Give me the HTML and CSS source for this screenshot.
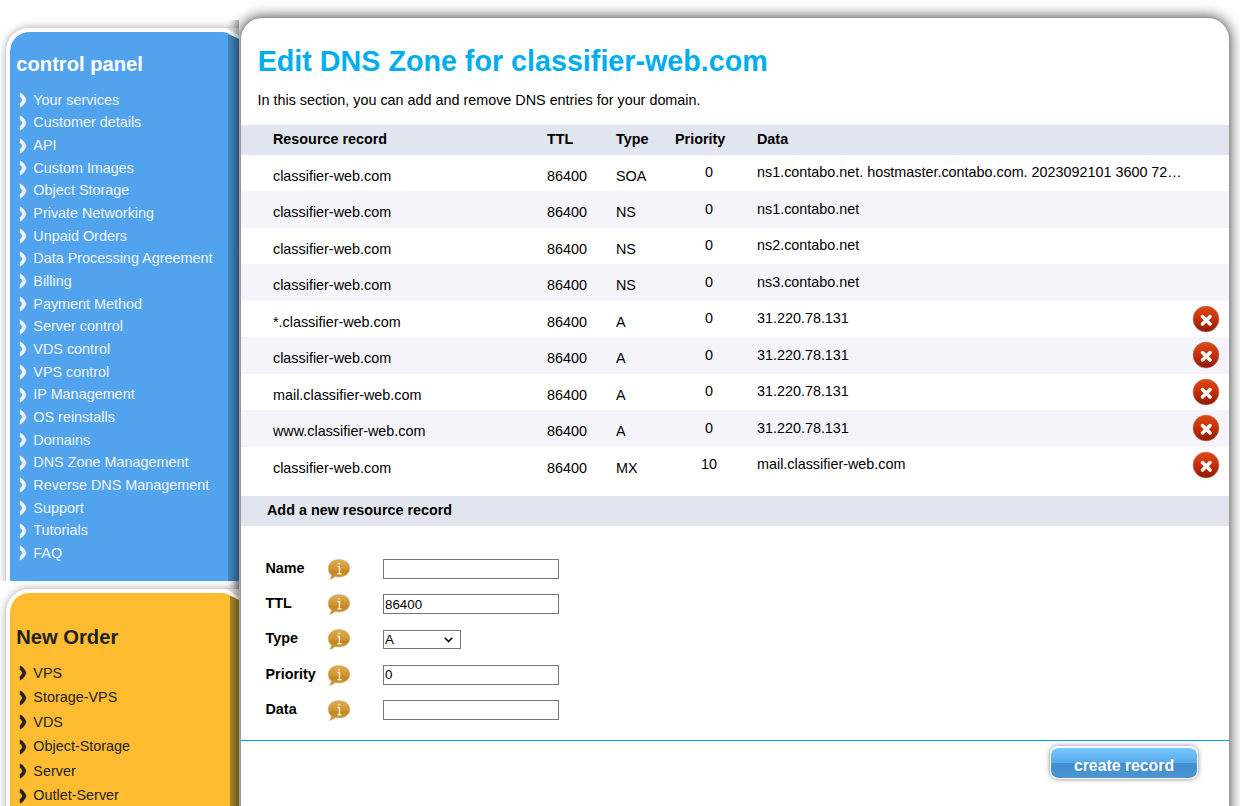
FILE: index.html
```
<!DOCTYPE html>
<html lang="en">
<head>
<meta charset="utf-8">
<title>Edit DNS Zone</title>
<link rel="stylesheet" href="styles.css">
</head>
<body>
<svg class="defs" width="0" height="0" aria-hidden="true">
  <defs>
    <linearGradient id="red" x1="0" y1="0" x2="0" y2="1"><stop offset="0" stop-color="#dc4a13"/><stop offset=".45" stop-color="#cb3108"/><stop offset="1" stop-color="#8c1a06"/></linearGradient>
    <linearGradient id="gold" x1="0" y1="0" x2="0" y2="1"><stop offset="0" stop-color="#dfae52"/><stop offset=".5" stop-color="#cf9430"/><stop offset=".6" stop-color="#c4871f"/><stop offset="1" stop-color="#d29a38"/></linearGradient>
    <symbol id="delete" viewBox="0 0 28 28"><circle cx="14" cy="14" r="13" fill="url(#red)" stroke="#b98a80" stroke-width=".6"/><path d="M10.500 11.500l7.600 7.600M18.100 11.500l-7.600 7.600" stroke="#fff" stroke-width="3.500" stroke-linecap="round"/></symbol>
    <symbol id="info" viewBox="0 0 24 23"><path d="M12 1.200c6.300 0 11 3.900 11 9s-4.700 9-11 9c-1.300 0-2.600-.2-3.800-.5C6.600 20.300 4.500 21.500 1.900 21.500c1.300-1 2-2.500 2.300-4.300C2.200 15.500 1 13 1 10.200c0-5.100 4.700-9 11-9z" fill="url(#gold)" stroke="#cfdcd3" stroke-width=".6"/><path d="M10.500 8.500h1.900v6.500M10.500 15.700h4" fill="none" stroke="#f6e8c8" stroke-width="1.500"/><circle cx="12" cy="5.600" r="1.200" fill="#ecd19a"/></symbol>
    <symbol id="chevron" viewBox="0 0 8 16"><path d="M1.200.800 C4.200 2.200 6.100 4.700 7.200 8 C6.100 11.300 4.200 13.800 1.200 15.200 L.9 11.400 C2.200 10.400 3 9.300 3.300 8 C3 6.700 2.200 5.600.9 4.600z" fill="currentColor" stroke="currentColor" stroke-width=".4"/></symbol>
    <symbol id="corner" viewBox="0 0 16 14"><path d="M0 0H2L16 7V11L8 7Q4 4 0 4z" fill="#fff"/><path d="M3 0H16V7z" fill="#ddd"/></symbol>
  </defs>
</svg>
<div class="page">
  <aside class="sidebar">
    <section class="slot slot-blue">
      <nav class="panel blue">
        <svg class="corner"><use href="#corner"/></svg>
        <h2>control panel</h2>
        <ul>
          <li><svg><use href="#chevron"/></svg>Your services</li>
          <li><svg><use href="#chevron"/></svg>Customer details</li>
          <li><svg><use href="#chevron"/></svg>API</li>
          <li><svg><use href="#chevron"/></svg>Custom Images</li>
          <li><svg><use href="#chevron"/></svg>Object Storage</li>
          <li><svg><use href="#chevron"/></svg>Private Networking</li>
          <li><svg><use href="#chevron"/></svg>Unpaid Orders</li>
          <li><svg><use href="#chevron"/></svg>Data Processing Agreement</li>
          <li><svg><use href="#chevron"/></svg>Billing</li>
          <li><svg><use href="#chevron"/></svg>Payment Method</li>
          <li><svg><use href="#chevron"/></svg>Server control</li>
          <li><svg><use href="#chevron"/></svg>VDS control</li>
          <li><svg><use href="#chevron"/></svg>VPS control</li>
          <li><svg><use href="#chevron"/></svg>IP Management</li>
          <li><svg><use href="#chevron"/></svg>OS reinstalls</li>
          <li><svg><use href="#chevron"/></svg>Domains</li>
          <li><svg><use href="#chevron"/></svg>DNS Zone Management</li>
          <li><svg><use href="#chevron"/></svg>Reverse DNS Management</li>
          <li><svg><use href="#chevron"/></svg>Support</li>
          <li><svg><use href="#chevron"/></svg>Tutorials</li>
          <li><svg><use href="#chevron"/></svg>FAQ</li>
        </ul>
      </nav>
    </section>
    <section class="slot slot-yellow">
      <nav class="panel yellow">
        <svg class="corner"><use href="#corner"/></svg>
        <h2>New Order</h2>
        <ul>
          <li><svg><use href="#chevron"/></svg>VPS</li>
          <li><svg><use href="#chevron"/></svg>Storage-VPS</li>
          <li><svg><use href="#chevron"/></svg>VDS</li>
          <li><svg><use href="#chevron"/></svg>Object-Storage</li>
          <li><svg><use href="#chevron"/></svg>Server</li>
          <li><svg><use href="#chevron"/></svg>Outlet-Server</li>
        </ul>
      </nav>
    </section>
  </aside>
  <main class="content">
    <h1>Edit DNS Zone for classifier-web.com</h1>
    <p class="intro">In this section, you can add and remove DNS entries for your domain.</p>
    <div class="records">
      <div class="row head"><span>Resource record</span><span>TTL</span><span>Type</span><span>Priority</span><span>Data</span></div>
      <div class="row"><span class="low">classifier-web.com</span><span class="low">86400</span><span class="low">SOA</span><span class="prio">0</span><span>ns1.contabo.net. hostmaster.contabo.com. 2023092101 3600 72…</span></div>
      <div class="row"><span class="low">classifier-web.com</span><span class="low">86400</span><span class="low">NS</span><span class="prio">0</span><span>ns1.contabo.net</span></div>
      <div class="row"><span class="low">classifier-web.com</span><span class="low">86400</span><span class="low">NS</span><span class="prio">0</span><span>ns2.contabo.net</span></div>
      <div class="row"><span class="low">classifier-web.com</span><span class="low">86400</span><span class="low">NS</span><span class="prio">0</span><span>ns3.contabo.net</span></div>
      <div class="row"><span class="low">*.classifier-web.com</span><span class="low">86400</span><span class="low">A</span><span class="prio">0</span><span>31.220.78.131</span><svg class="del"><use href="#delete"/></svg></div>
      <div class="row"><span class="low">classifier-web.com</span><span class="low">86400</span><span class="low">A</span><span class="prio">0</span><span>31.220.78.131</span><svg class="del"><use href="#delete"/></svg></div>
      <div class="row"><span class="low">mail.classifier-web.com</span><span class="low">86400</span><span class="low">A</span><span class="prio">0</span><span>31.220.78.131</span><svg class="del"><use href="#delete"/></svg></div>
      <div class="row"><span class="low">www.classifier-web.com</span><span class="low">86400</span><span class="low">A</span><span class="prio">0</span><span>31.220.78.131</span><svg class="del"><use href="#delete"/></svg></div>
      <div class="row"><span class="low">classifier-web.com</span><span class="low">86400</span><span class="low">MX</span><span class="prio">10</span><span>mail.classifier-web.com</span><svg class="del"><use href="#delete"/></svg></div>
    </div>
    <h3>Add a new resource record</h3>
    <form class="form">
      <div class="field"><label>Name</label><svg class="info"><use href="#info"/></svg><input type="text"></div>
      <div class="field"><label>TTL</label><svg class="info"><use href="#info"/></svg><input type="text" value="86400"></div>
      <div class="field"><label>Type</label><svg class="info"><use href="#info"/></svg><div class="select">A<svg width="9" height="6" viewBox="0 0 9 6"><path d="M.8.800L4.500 4.600 8.200.8" fill="none" stroke="#000" stroke-width="1.600"/></svg></div></div>
      <div class="field"><label>Priority</label><svg class="info"><use href="#info"/></svg><input type="text" value="0"></div>
      <div class="field"><label>Data</label><svg class="info"><use href="#info"/></svg><input type="text"></div>
    </form>
    <div class="actions"><button type="button">create record</button></div>
  </main>
</div>
</body>
</html>
```
FILE: styles.css
```
* { box-sizing: border-box; }
body {
  margin: 0;
  height: 806px;
  overflow: hidden;
  background: #fff;
  color: #000;
  font: 14.4px/17px "Liberation Sans", Arial, sans-serif;
}
.defs { position: absolute; }
.page { display: flex; height: 806px; overflow: hidden; }
h1, h2, h3, p, ul { margin: 0; padding: 0; }

.sidebar { width: 239px; position: relative; z-index: 1; flex: none; }
/* soft shade cast by the content pane on the sidebar edge */
.sidebar::after {
  content: "";
  position: absolute;
  top: 20px;
  right: 0;
  bottom: 0;
  width: 11px;
  background: linear-gradient(90deg, rgba(0,0,0,0), rgba(0,0,0,.08) 40%, rgba(0,0,0,.32));
}
.slot { overflow: hidden; padding-left: 6px; }
.slot-blue { height: 581px; padding-top: 28px; }
.slot-yellow { height: 225px; padding-top: 8px; }
.panel {
  position: relative;
  height: 600px;
  border: solid #fff;
  border-width: 4px 0 0 4px;
  border-radius: 23px 0 0 0;
  box-shadow: 0 0 9px rgba(0,0,0,.36);
  padding-left: 6.300px;
}
.panel::before {
  content: "";
  position: absolute;
  top: 3px;
  right: 0;
  bottom: 0;
}
.blue { background: #52a3ee; background-clip: padding-box; color: #f1f6fb; padding-top: 20px; }
.blue::before { width: 11px; background: linear-gradient(90deg, #4187c4, #3c79ae); }
.yellow { background: #ffbc31; background-clip: padding-box; color: #222; padding-top: 32px; }
.yellow::before { width: 9px; background: linear-gradient(90deg, #a58a22, #9a8020); }
.corner { position: absolute; top: -4px; right: 0; width: 16px; height: 14px; }
.panel h2 { font-size: 20.160px; line-height: 24px; margin-bottom: 12.900px; }
.blue h2 { color: #fff; }
.yellow h2 { margin-bottom: 12.200px; }
.panel ul { list-style: none; }
.panel li { display: flex; align-items: center; height: 22.670px; padding-left: 3px; }
.yellow li { height: 24.450px; }
.panel li svg { width: 8px; height: 16px; margin-right: 6px; }

.content {
  width: 988px;
  height: 830px;
  margin: 18px 0 0 2px;
  flex: none;
  background: #fff;
  border-radius: 21px 21px 0 0;
  box-shadow: 0 0 0 1px #999, 0 0 14px 1px #444;
  font-size: 14.360px;
}
h1 { color: #00aeef; font-size: 28.700px; line-height: 34px; padding: 26px 0 0 16.700px; }
.intro { padding: 14px 0 0 16.500px; height: 47px; }
.records { height: 371px; }
.row {
  display: grid;
  grid-template-columns: 274px 69px 59px 82px 434.500px 28px;
  align-items: center;
  height: 36.550px;
  padding: 0 0 .6px 32px;
  white-space: nowrap;
}
.row:nth-child(odd) { background: #f4f4fa; }
.row.head { height: 29.650px; padding-bottom: 1.650px; background: #e1e5f0; font-weight: bold; }
.low { padding-top: 7px; }
.prio { width: 68px; text-align: center; }
.del { width: 28px; height: 28px; }
h3 { height: 30px; padding-left: 26px; background: #e1e5f0; font-size: 14.360px; line-height: 28px; }
.form { height: 214px; padding: 25.200px 0 0 24.500px; }
.field { display: flex; align-items: center; height: 35.250px; }
.field label { width: 61.200px; font-weight: bold; padding-bottom: 1px; }
.info { width: 24px; height: 23px; margin: 1px 32.300px 0 0; }
.field input, .select {
  width: 176px;
  height: 20px;
  border: 1px solid #767676;
  padding: 1px;
  font: 13.333px/16px "Liberation Sans", Arial, sans-serif;
  color: #000;
  background: #fff;
}
.select { display: flex; align-items: center; justify-content: space-between; width: 78px; height: 19px; padding: 1px 7px 0 1px; }
.actions { border-top: 1px solid #00a8e1; display: flex; justify-content: flex-end; padding: 5px 31px 0 0; }
button {
  width: 148px;
  height: 33px;
  border: 1px solid #fff;
  border-top-width: 2px;
  border-radius: 8px;
  padding: 6px 0 0;
  background: linear-gradient(#7cc9ff, #55a9ea 50%, #418fd0 51%, #4d94d0) padding-box;
  box-shadow: 0 0 5px rgba(0,0,0,.5);
  color: #fff;
  font: bold 15.800px/18px "Liberation Sans", Arial, sans-serif;
}
```
